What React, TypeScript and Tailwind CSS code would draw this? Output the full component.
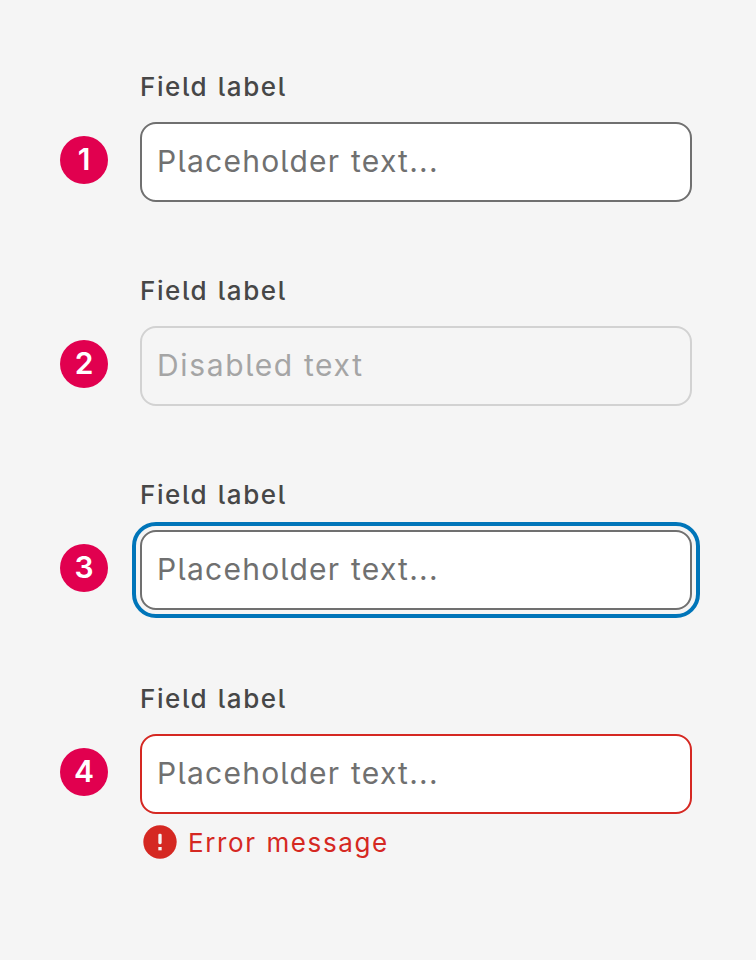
type Field = {
  label: string;
  text: string;
  box: string;
  textStyle: string;
  error?: string;
};

const PLACEHOLDER = "text-[#707070] tracking-[1.25px] [word-spacing:1px]";

const fields: Field[] = [
  {
    label: "Field label",
    text: "Placeholder text...",
    box: "border-[#707070] bg-white",
    textStyle: PLACEHOLDER,
  },
  {
    label: "Field label",
    text: "Disabled text",
    box: "border-[#d2d2d2]",
    textStyle: "text-[#a5a5a5] tracking-[1.65px]",
  },
  {
    label: "Field label",
    text: "Placeholder text...",
    box: "border-[#707070] bg-white outline-4 outline-offset-4 outline-[#0075b9]",
    textStyle: PLACEHOLDER,
  },
  {
    label: "Field label",
    text: "Placeholder text...",
    box: "border-[#d52822] bg-white",
    textStyle: PLACEHOLDER,
    error: "Error message",
  },
];

function ErrorIcon() {
  return (
    <svg viewBox="0 0 24 24" className="size-10" aria-hidden="true">
      <circle cx="12" cy="12" r="10" fill="#d52822" />
      <rect x="11" y="7" width="2" height="6.3" rx="0.8" fill="#f5f5f5" />
      <rect x="11" y="15" width="2" height="2" fill="#f5f5f5" />
    </svg>
  );
}

export default function App() {
  return (
    <main className="flex min-h-[960px] w-[756px] flex-col gap-16 bg-[#f5f5f5] pt-[62px] pl-[60px] font-['Inter',sans-serif] [font-feature-settings:'cv05']">
      {fields.map((field, i) => (
        <section key={i} className="flex flex-col">
          <div className="mb-3 ml-20 flex h-12 items-center text-[26px] font-medium whitespace-nowrap text-[#474747] tracking-[1.6px] [word-spacing:1px]">
            {field.label}
          </div>
          <div className="flex h-20">
            <div className="mt-[14px] mr-8 flex size-12 shrink-0 items-center justify-center rounded-full bg-[#e1004f] pb-0.5 text-[30px] leading-none font-semibold text-white">
              {i + 1}
            </div>
            <div
              className={`flex h-20 w-[552px] items-center rounded-2xl border-2 pb-px pl-[15px] text-[30px] whitespace-nowrap ${field.box}`}
            >
              <span className={field.textStyle}>{field.text}</span>
            </div>
          </div>
          {field.error && (
            <div className="mt-2 ml-20 flex h-10 items-center gap-2 text-[26px] whitespace-nowrap text-[#d52822]">
              <ErrorIcon />
              <span className="tracking-[1.6px] [word-spacing:1px]">{field.error}</span>
            </div>
          )}
        </section>
      ))}
    </main>
  );
}
